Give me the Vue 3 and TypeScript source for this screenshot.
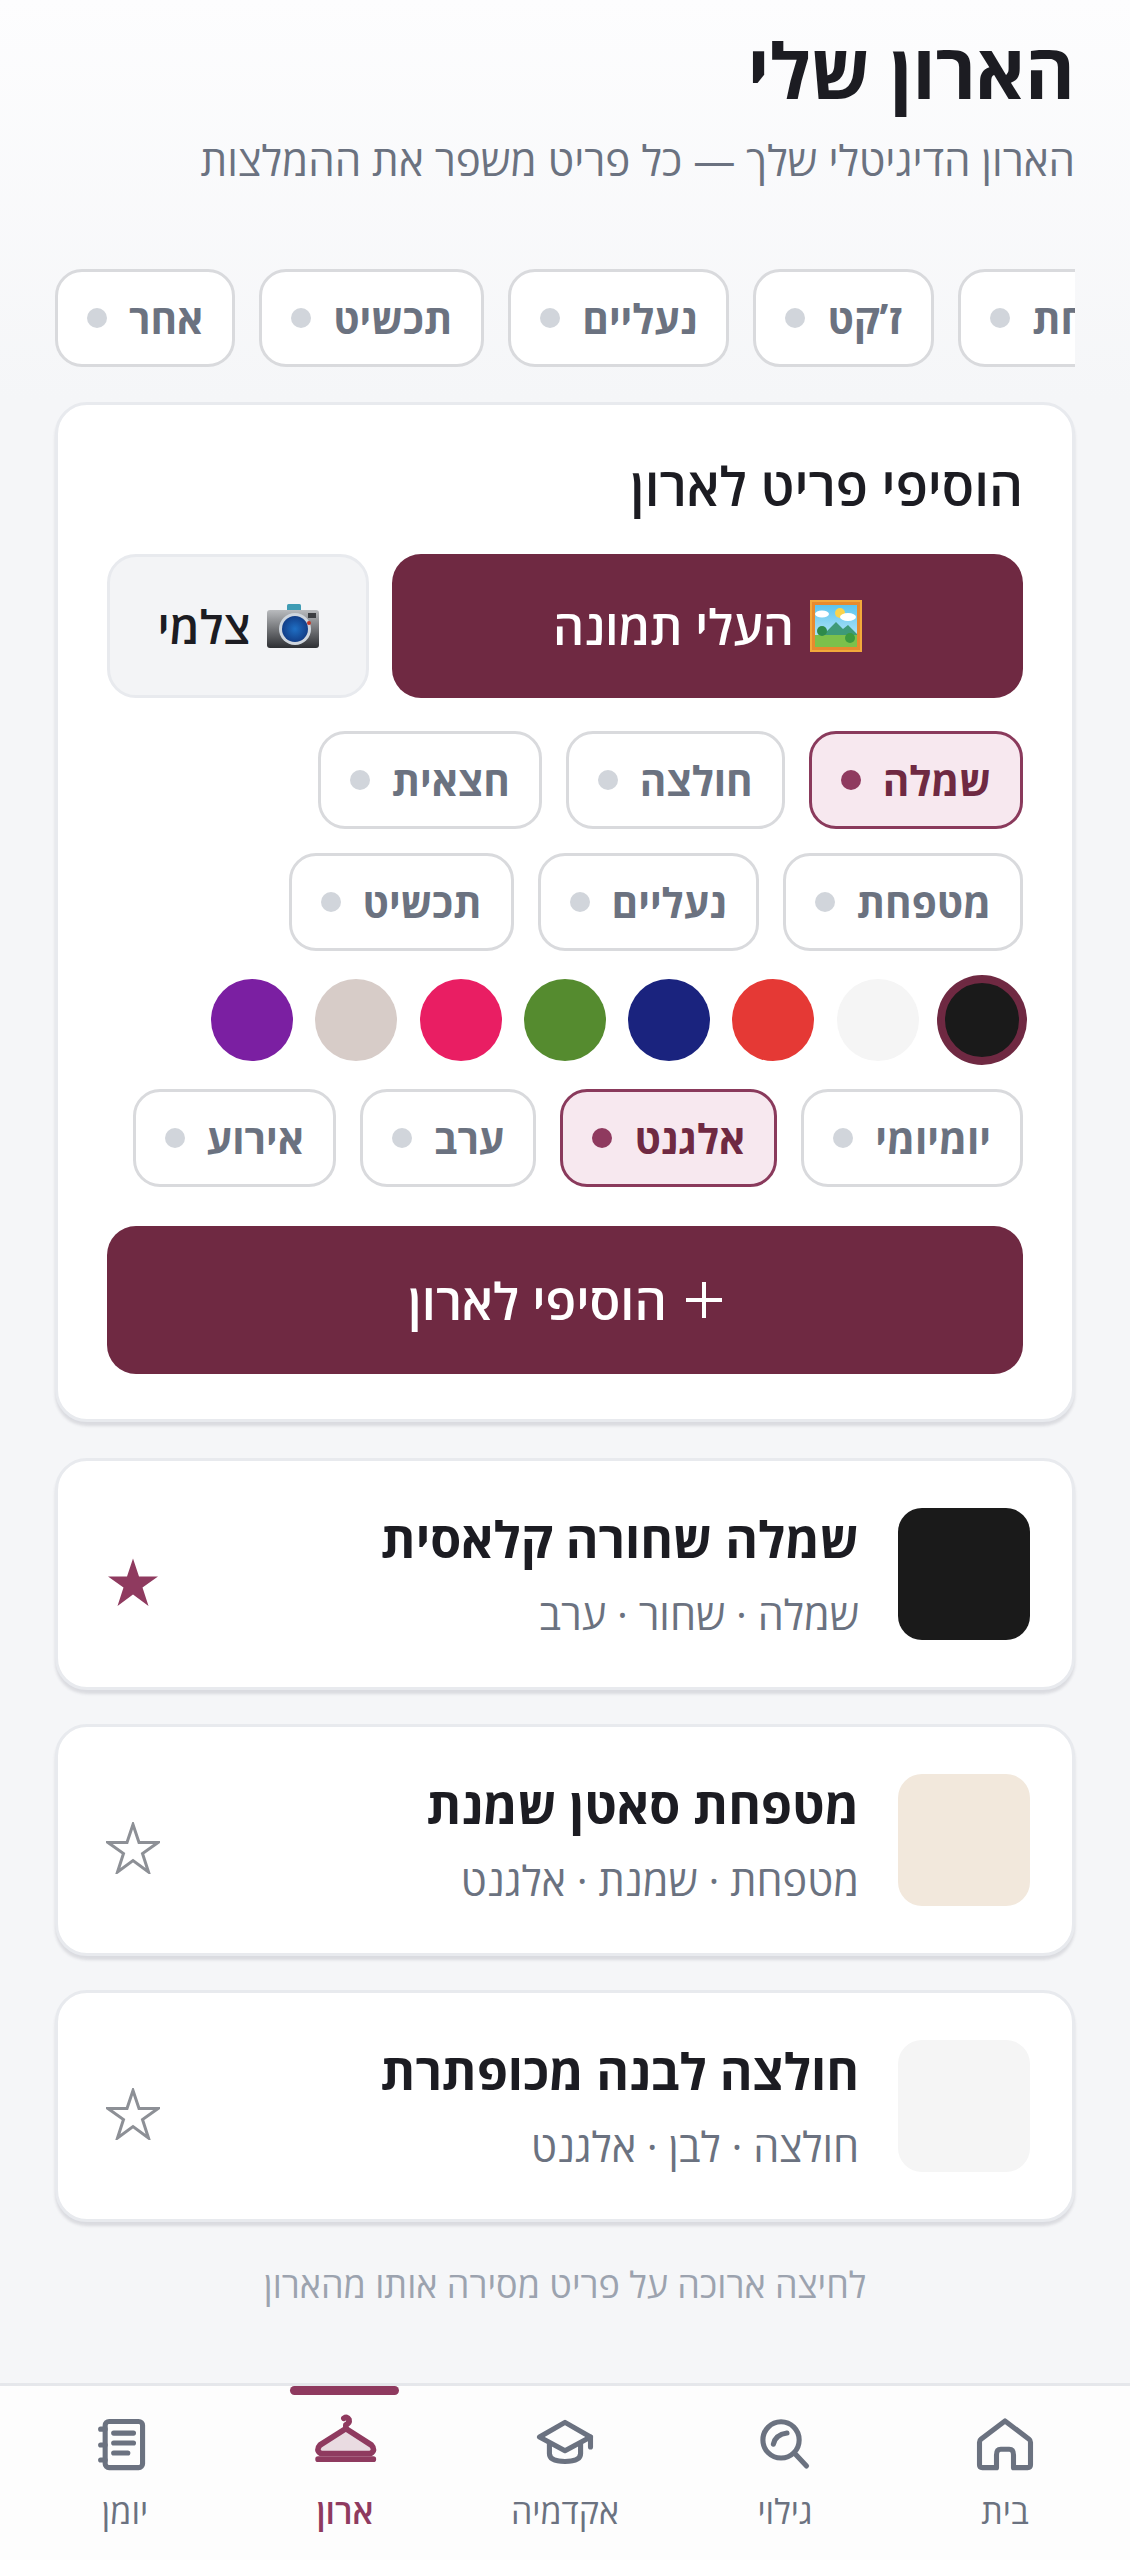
<template>
  <div class="page" dir="rtl">
    <main class="content">
      <header class="head">
        <h1 class="title">הארון שלי</h1>
        <p class="subtitle">הארון הדיגיטלי שלך — כל פריט משפר את ההמלצות</p>
      </header>

      <div class="filters">
        <button v-for="f of filters" :key="f" class="chip">
          <span>{{ f }}</span>
          <i class="dot" />
        </button>
      </div>

      <section class="card add">
        <h2 class="add-title">הוסיפי פריט לארון</h2>

        <div class="upload-row">
          <button class="btn-upload">
            <svg class="emoji" viewBox="0 0 52 52">
              <defs>
                <linearGradient id="sky" x1="0" y1="0" x2="0" y2="1">
                  <stop offset="0" stop-color="#5cc4ee" />
                  <stop offset="1" stop-color="#cdeefa" />
                </linearGradient>
              </defs>
              <rect x="0" y="0" width="52" height="52" fill="#f2a93b" />
              <rect x="2" y="2" width="48" height="48" fill="#e68a2e" />
              <rect x="5" y="5" width="42" height="42" fill="url(#sky)" />
              <circle cx="30" cy="13" r="5" fill="#fbd34c" />
              <ellipse cx="12" cy="14" rx="7" ry="3.5" fill="#fff" />
              <ellipse cx="38" cy="17" rx="8" ry="4" fill="#fff" />
              <path d="M12 36 L26 22 L33 29 L38 25 L47 34 V38 H12 Z" fill="#3e9a78" />
              <rect x="5" y="35" width="42" height="12" fill="#7cc04b" />
              <circle cx="12" cy="31" r="5" fill="#2f8a4a" />
              <circle cx="40" cy="38" r="5" fill="#3c9a3f" />
            </svg>
            <span>העלי תמונה</span>
          </button>
          <button class="btn-camera">
            <svg class="emoji cam" viewBox="0 0 52 44">
              <defs>
                <linearGradient id="body" x1="0" y1="0" x2="0" y2="1">
                  <stop offset="0" stop-color="#b9bbbe" />
                  <stop offset="1" stop-color="#2d2f33" />
                </linearGradient>
                <radialGradient id="lens">
                  <stop offset="0" stop-color="#1f6fc4" />
                  <stop offset="1" stop-color="#123e88" />
                </radialGradient>
              </defs>
              <rect x="20" y="0" width="14" height="8" rx="1.5" fill="#3f9cb4" />
              <rect x="0" y="6" width="52" height="38" rx="3" fill="url(#body)" />
              <circle cx="28" cy="25" r="16" fill="#cfd6de" />
              <circle cx="28" cy="25" r="13" fill="url(#lens)" />
              <rect x="41" y="9" width="8" height="5" fill="#3b3d41" />
              <circle cx="42" cy="19" r="2" fill="#c0392b" />
            </svg>
            <span>צלמי</span>
          </button>
        </div>

        <div class="chip-group">
          <button v-for="c of types" :key="c" class="chip" :class="{ on: c === 'שמלה' }">
            <span>{{ c }}</span>
            <i class="dot" />
          </button>
        </div>

        <div class="swatches">
          <span
            v-for="(s, i) of swatches"
            :key="s"
            class="swatch"
            :class="{ picked: i === 0 }"
            :style="{ background: s }"
          />
        </div>

        <div class="chip-group styles">
          <button v-for="c of styles" :key="c" class="chip" :class="{ on: c === 'אלגנט' }">
            <span>{{ c }}</span>
            <i class="dot" />
          </button>
        </div>

        <button class="btn-add">
          <svg class="plus" viewBox="0 0 36 36">
            <path d="M18 0V36M0 18H36" />
          </svg>
          <span>הוסיפי לארון</span>
        </button>
      </section>

      <article v-for="item of items" :key="item.name" class="card item">
        <div class="thumb" :style="{ background: item.color }" />
        <div class="item-text">
          <div class="item-name">{{ item.name }}</div>
          <div class="item-meta">{{ item.meta }}</div>
        </div>
        <svg class="star" :class="{ fav: item.fav }" viewBox="0 0 54 52">
          <path d="M27 2.5 L33 20.5 L52 20.5 L36.5 31.5 L42.5 50 L27 38.5 L11.5 50 L17.5 31.5 L2 20.5 L21 20.5 Z" />
        </svg>
      </article>

      <p class="hint">לחיצה ארוכה על פריט מסירה אותו מהארון</p>
    </main>

    <nav class="nav">
      <div v-for="n of nav" :key="n.label" class="nav-item" :class="{ active: n.active }">
        <i v-if="n.active" class="bar" />
        <svg class="nav-icon" viewBox="0 0 24 24">
          <template v-if="n.icon === 'home'">
            <path d="M3 11 Q3 10.4 3.5 10 L12 3.5 L20.5 10 Q21 10.4 21 11 V19 Q21 20 20 20 H15 V15.5 Q15 13.5 13.5 13.5 H10.5 Q9 13.5 9 15.5 V20 H4 Q3 20 3 19 Z" />
          </template>
          <template v-else-if="n.icon === 'search'">
            <circle cx="10.6" cy="10.2" r="6.4" />
            <path d="M15.3 14.8 L19.6 19.4 M7.9 11.7 Q8.6 8.4 12.7 7.8" />
          </template>
          <template v-else-if="n.icon === 'cap'">
            <path d="M12 4 L21 9.2 L12 14 L3 9.2 Z" />
            <path d="M6.5 11.5 V15 Q6.5 17.8 12 17.8 Q17.5 17.8 17.5 15 V11.5 M21 9.2 V12.7" />
          </template>
          <template v-else-if="n.icon === 'hanger'">
            <path class="tint" d="M12.3 6.2 L21.3 12 Q23 13.8 21 15 H3.5 Q1.5 13.8 3.2 12 Z" />
            <path d="M12.3 6.2 V4.9 Q13.7 4.3 13.4 3 Q12.8 1.8 11.6 2.6 M2.5 17 H22" />
          </template>
          <template v-else>
            <rect x="5" y="3.7" width="13.2" height="16.3" rx="1.4" />
            <path d="M8 7.8 H15 M8 11.3 H15 M8 14.8 H13 M3.4 6.4 H5 M3.4 12 H5 M3.4 17.3 H5" />
          </template>
        </svg>
        <span class="nav-label">{{ n.label }}</span>
      </div>
    </nav>
  </div>
</template>

<script setup lang="ts">
interface WardrobeItem {
  name: string
  meta: string
  color: string
  fav: boolean
}

const filters = ['מטפחת', 'ז’קט', 'נעליים', 'תכשיט', 'אחר']
const types = ['שמלה', 'חולצה', 'חצאית', 'מטפחת', 'נעליים', 'תכשיט']
const styles = ['יומיומי', 'אלגנט', 'ערב', 'אירוע']
const swatches = ['#1a1a1a', '#f5f5f5', '#e53935', '#1a237e', '#558b2f', '#e91e63', '#d7ccc8', '#7b1fa2']

const items: WardrobeItem[] = [
  { name: 'שמלה שחורה קלאסית', meta: 'שמלה · שחור · ערב', color: '#1a1a1a', fav: true },
  { name: 'מטפחת סאטן שמנת', meta: 'מטפחת · שמנת · אלגנט', color: '#f2e8dc', fav: false },
  { name: 'חולצה לבנה מכופתרת', meta: 'חולצה · לבן · אלגנט', color: '#f5f5f5', fav: false },
]

const nav = [
  { label: 'בית', icon: 'home', active: false },
  { label: 'גילוי', icon: 'search', active: false },
  { label: 'אקדמיה', icon: 'cap', active: false },
  { label: 'ארון', icon: 'hanger', active: true },
  { label: 'יומן', icon: 'book', active: false },
]
</script>

<style>
html,
body {
  margin: 0;
  background: #f5f6f8;
}
</style>

<style scoped>
.page {
  width: 1130px;
  height: 2560px;
  display: flex;
  flex-direction: column;
  overflow: hidden;
  font-family: "Open Sans", "Liberation Sans", sans-serif;
  color: #1c1c22;
  background: linear-gradient(180deg, #fdfdfe 0, #f5f6f8 400px);
}

.content {
  flex: 1;
  padding: 0 55px;
  display: flex;
  flex-direction: column;
}

.head {
  height: 269px;
}

.title {
  margin: 0;
  padding-top: 25px;
  font-size: 76px;
  line-height: 90px;
  font-weight: 700;
}

.subtitle {
  margin: 15px 0 0;
  font-size: 42.2px;
  line-height: 60px;
  color: #6b7280;
}

button {
  font-family: inherit;
  padding: 0;
  border: 0;
  cursor: pointer;
}

.filters {
  display: flex;
  justify-content: flex-end;
  gap: 24px;
  overflow: hidden;
  height: 106px;
  flex: none;
}

.chip {
  flex: none;
  height: 98px;
  box-sizing: border-box;
  padding: 0 29px;
  display: flex;
  align-items: center;
  gap: 22px;
  background: #fff;
  border: 3px solid #d9dadd;
  border-radius: 27px;
  font-size: 40.5px;
  font-weight: 700;
  color: #6b7280;
}

.dot {
  width: 20px;
  height: 20px;
  border-radius: 50%;
  background: #d1d5db;
}

.chip.on {
  background: #f7e8ef;
  border-color: #8a3a5c;
  color: #6f2942;
}

.chip.on .dot {
  background: #8f3a5f;
}

.card {
  background: #fff;
  border: 3px solid #e8eaee;
  border-radius: 32px;
  box-shadow: 0 4px 3px rgba(60, 60, 80, 0.14);
  box-sizing: border-box;
  flex: none;
}

.add {
  margin-top: 27px;
  height: 1020px;
  padding: 49px 49px 0;
  display: flex;
  flex-direction: column;
}

.add-title {
  margin: 0;
  font-size: 53px;
  line-height: 64px;
  font-weight: 600;
}

.upload-row {
  margin-top: 36px;
  display: flex;
  gap: 23px;
}

.btn-upload,
.btn-camera {
  height: 144px;
  border-radius: 29px;
  display: flex;
  align-items: center;
  justify-content: center;
  gap: 16px;
  font-weight: 600;
  box-sizing: border-box;
}

.btn-upload {
  flex: 1;
  background: #6f2942;
  color: #fff;
  font-size: 48.5px;
}

.btn-camera {
  width: 262px;
  flex: none;
  background: #f3f4f6;
  border: 3px solid #e8eaee;
  color: #1c1c22;
  font-size: 46px;
}

.emoji {
  width: 52px;
  height: 52px;
}

.cam {
  height: 44px;
}

.chip-group {
  margin-top: 33px;
  display: flex;
  flex-wrap: wrap;
  gap: 24px;
}

.swatches {
  margin-top: 28px;
  display: flex;
  gap: 22.3px;
}

.swatch {
  width: 82px;
  height: 82px;
  border-radius: 50%;
  box-sizing: border-box;
}

.swatch.picked {
  border: 4px solid #6f2942;
  box-shadow: 0 0 0 4px #6f2942;
}

.styles {
  margin-top: 28px;
}

.btn-add {
  margin-top: 39px;
  height: 148px;
  border-radius: 29px;
  background: #6f2942;
  color: #fff;
  display: flex;
  align-items: center;
  justify-content: center;
  gap: 19px;
  font-size: 50.5px;
  font-weight: 600;
}

.plus {
  width: 36px;
  height: 36px;
  fill: none;
  stroke: #fff;
  stroke-width: 4;
}

.item {
  height: 232px;
  padding: 0 42px;
  display: flex;
  align-items: center;
  gap: 39px;
}

.card.add + .item {
  margin-top: 36px;
}

.item + .item {
  margin-top: 34px;
}

.thumb {
  width: 132px;
  height: 132px;
  border-radius: 24px;
  flex: none;
}

.item-text {
  flex: 1;
  padding-bottom: 1px;
}

.item-name {
  font-size: 50px;
  line-height: 66px;
  font-weight: 700;
}

.item-meta {
  margin-top: 15px;
  font-size: 41.5px;
  line-height: 54px;
  color: #6b7280;
}

.star {
  width: 54px;
  height: 52px;
  margin: 16px 8px 0 6px;
  flex: none;
  fill: #fff;
  stroke: #8d9096;
  stroke-width: 3;
}

.star.fav {
  fill: #8f3a5f;
  stroke: none;
}

.hint {
  margin: 38px 0 0;
  text-align: center;
  font-size: 36px;
  line-height: 50px;
  color: #9ca3af;
}

.nav {
  height: 177px;
  flex: none;
  box-sizing: border-box;
  border-top: 3px solid #e5e7eb;
  background: #fdfdfd;
  padding: 0 15px;
  display: flex;
}

.nav-item {
  flex: 1;
  position: relative;
  display: flex;
  flex-direction: column;
  align-items: center;
  padding-top: 25px;
  color: #6b7280;
}

.nav-item.active {
  color: #8f3a5f;
}

.bar {
  position: absolute;
  top: 0;
  left: 55px;
  width: 109px;
  height: 9px;
  border-radius: 5px;
  background: #8f3a5f;
}

.nav-icon {
  width: 68px;
  height: 68px;
  fill: none;
  stroke: currentColor;
  stroke-width: 1.8;
  stroke-linecap: round;
  stroke-linejoin: round;
}

.active .nav-icon {
  stroke-width: 2;
}

.tint {
  fill: #e9dbe1;
}

.nav-label {
  margin-top: 9px;
  font-size: 34px;
  line-height: 46px;
  font-weight: 500;
}

.active .nav-label {
  font-weight: 600;
}
</style>
